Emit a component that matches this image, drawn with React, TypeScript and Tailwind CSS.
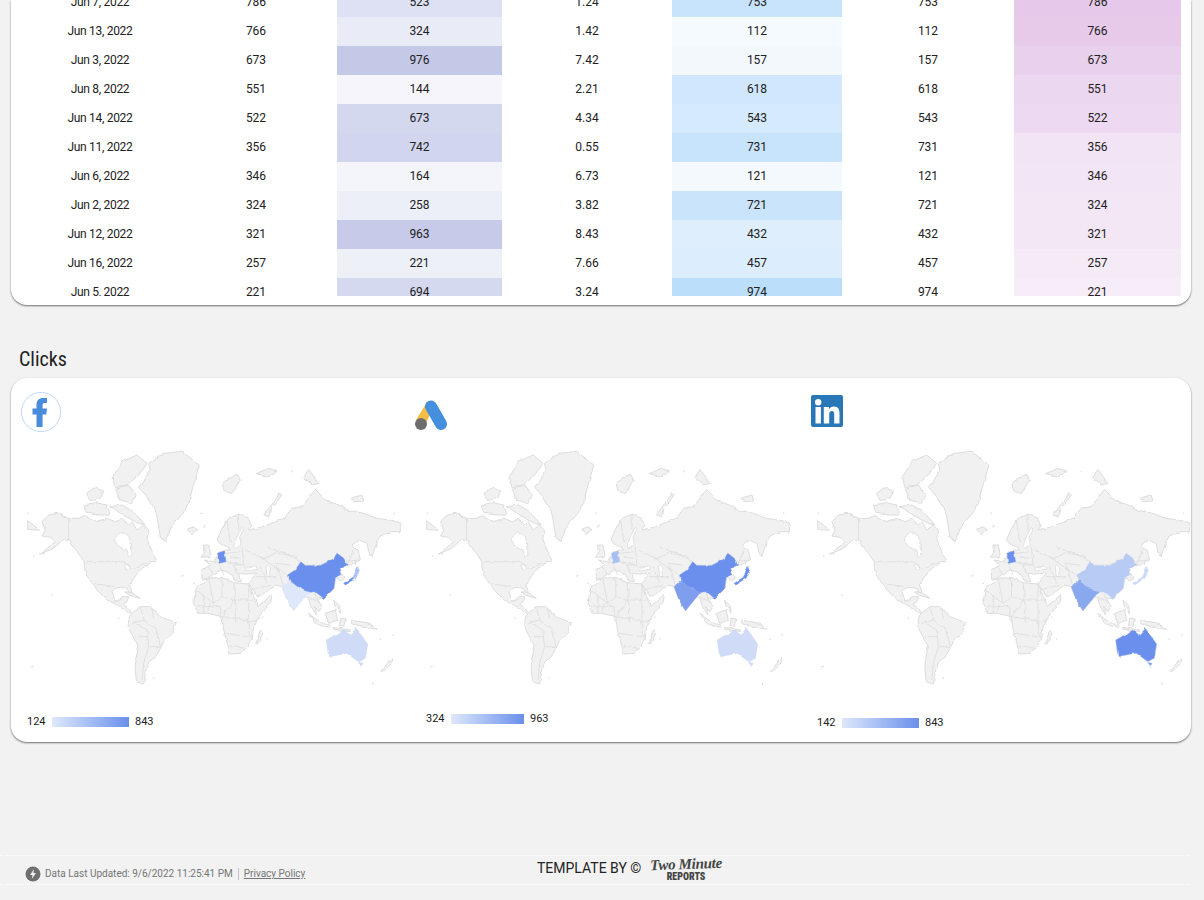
import React from "react";

const rows = [
  ["Jun 7, 2022", "786", "523", "#dde1f3", "1.24", "753", "#c8e3fc", "#e6c9ea"],
  ["Jun 13, 2022", "766", "324", "#e9ecf7", "1.42", "112", "#f5faff", "#e7caea"],
  ["Jun 3, 2022", "673", "976", "#c5c9e8", "7.42", "157", "#f3f8fd", "#e9d0ec"],
  ["Jun 8, 2022", "551", "144", "#f5f5fb", "2.21", "618", "#d0e7fd", "#ecd7f0"],
  ["Jun 14, 2022", "522", "673", "#d4d8ef", "4.34", "543", "#d6eafd", "#edd9f1"],
  ["Jun 11, 2022", "356", "742", "#d1d5ee", "0.55", "731", "#c8e3fc", "#f2e4f5"],
  ["Jun 6, 2022", "346", "164", "#f4f4fb", "6.73", "121", "#f4f9fe", "#f2e5f5"],
  ["Jun 2, 2022", "324", "258", "#eceff8", "3.82", "721", "#cae4fc", "#f3e7f6"],
  ["Jun 12, 2022", "321", "963", "#c7cae8", "8.43", "432", "#deeefd", "#f3e7f6"],
  ["Jun 16, 2022", "257", "221", "#eef0f8", "7.66", "457", "#dcedfd", "#f5ebf7"],
  ["Jun 5, 2022", "221", "694", "#d5d9ef", "3.24", "974", "#bbdefb", "#f6edf8"],
];

const land = [
  // North America
  "M125 215 L145 195 L170 190 L205 205 L235 205 L255 197 L290 215 L320 205 L345 215 L365 205 L385 225 L395 215 L410 240 L430 225 L445 240 L440 265 L447 285 L458 310 L470 335 L450 335 L440 348 L420 360 L405 378 L395 395 L388 405 L398 435 L392 438 L380 415 L360 412 L345 415 L335 425 L345 450 L360 450 L365 440 L385 440 L380 455 L368 462 L385 475 L395 490 L385 490 L370 475 L345 462 L320 450 L290 420 L275 400 L258 375 L252 350 L252 335 L235 310 L215 285 L205 270 L185 272 L160 295 L120 312 L165 275 L150 262 L125 258 L135 240 Z",
  // South America
  "M388 498 L405 480 L420 470 L450 470 L480 500 L527 518 L515 550 L490 575 L482 592 L465 622 L445 640 L438 655 L430 702 L408 695 L404 650 L410 610 L415 590 L388 540 L384 510 Z",
  // Greenland
  "M415 112 L450 62 L445 40 L490 10 L545 4 L597 45 L575 120 L565 160 L548 190 L512 230 L495 275 L480 262 L470 200 L465 180 L440 140 Z",
  // Arctic islands
  "M258 130 L285 112 L310 125 L300 145 L270 152 Z",
  "M250 165 L285 158 L320 165 L330 195 L295 195 L258 190 Z",
  "M330 170 L365 165 L400 185 L435 225 L420 222 L395 210 L370 195 Z",
  "M335 85 L365 35 L410 15 L440 40 L415 75 L380 105 L345 110 Z",
  "M345 115 L385 105 L408 135 L395 160 L360 150 Z",
  // Iceland, Britain, Ireland, Svalbard etc
  "M560 238 L580 230 L592 240 L575 252 Z",
  "M612 285 L625 285 L632 320 L602 322 L614 305 Z",
  "M665 95 L710 72 L720 90 L695 130 L672 125 Z",
  "M770 70 L805 55 L830 62 L805 82 Z",
  "M790 195 L840 130 L845 135 L810 180 L805 200 Z",
  "M910 80 L925 58 L955 100 L935 105 Z",
  "M1048 145 L1085 135 L1090 152 L1060 155 Z",
  "M1060 305 L1072 310 L1068 345 L1062 335 Z",
  // Africa
  "M580 460 L585 420 L625 385 L665 382 L700 398 L745 402 L772 470 L815 432 L812 455 L780 492 L760 530 L755 570 L722 610 L690 612 L670 540 L665 500 L622 490 L592 490 Z",
  "M765 580 L782 540 L788 550 L772 582 Z",
  // Eurasia
  "M605 378 L605 360 L630 345 L612 330 L640 335 L652 310 L675 300 L690 300 L680 290 L660 282 L650 270 L665 235 L685 205 L715 192 L745 205 L755 225 L745 240 L770 235 L800 225 L825 215 L850 205 L875 175 L905 170 L945 118 L975 150 L1015 165 L1040 180 L1090 190 L1130 205 L1165 210 L1200 218 L1200 245 L1170 245 L1140 258 L1130 275 L1115 320 L1105 305 L1100 280 L1075 270 L1055 285 L1075 305 L1080 330 L1050 345 L1040 345 L1018 355 L1030 375 L1033 385 L1018 395 L1008 380 L1005 395 L1000 416 L975 440 L950 445 L965 470 L955 485 L945 470 L948 495 L930 465 L925 445 L915 440 L900 450 L880 482 L860 450 L845 410 L825 405 L810 415 L800 425 L770 442 L755 415 L745 402 L755 385 L770 370 L735 372 L715 370 L720 395 L705 392 L695 375 L680 365 L660 360 L640 372 L620 385 L605 388 Z",
  // NZ, SE Asia
  "M1142 662 L1175 625 L1178 632 L1150 665 Z",
  "M925 490 L950 510 L990 530 L985 535 L945 520 Z",
  "M975 490 L1005 480 L1012 510 L985 520 Z",
  "M1020 505 L1035 505 L1030 530 L1018 525 Z",
  "M1000 450 L1018 468 L1020 490 L1005 470 Z",
  "M1050 510 L1110 520 L1128 538 L1090 530 L1055 522 Z",
  "M1000 532 L1050 540 L1050 545 L1000 538 Z",
  "M375 425 L395 428 L420 445 L385 435 Z",
  "M82 212 L118 240 L100 240 L82 238 Z",
];

const water = [
  "M345 262 L365 245 L385 258 L392 275 L395 315 L385 322 L380 300 L350 285 Z",
  "M372 345 L384 343 L390 356 L378 358 Z",
  "M700 288 L712 255 L725 232 L730 238 L718 262 L722 285 L708 294 Z",
  "M735 352 L768 348 L772 358 L738 362 Z",
  "M797 348 L806 348 L809 382 L800 378 Z",
];

const borders = [
  "M205 205 L205 270", "M252 335 L370 335 L395 355 L440 340", "M280 402 L310 405 L345 410",
  "M345 450 L362 445", "M420 470 L430 510 L470 540 L480 590", "M405 520 L440 540 L445 590 L430 640 L425 690",
  "M430 510 L395 520", "M455 475 L460 505", "M445 590 L480 590", "M405 560 L440 560",
  "M585 420 L640 460 L665 440 L700 450 L760 450", "M625 385 L640 460", "M665 382 L665 440", "M700 398 L710 520", "M745 402 L745 520 L790 500",
  "M590 470 L660 470 L660 510", "M665 500 L740 510 L755 570", "M675 550 L745 560", "M690 590 L740 595", "M620 490 L630 460", "M610 435 L610 490", "M700 450 L665 500",
  "M640 338 L655 340 L670 375", "M677 335 L730 345 L735 350", "M655 305 L680 310 L720 305", "M725 290 L730 345", "M680 212 L690 280", "M715 192 L715 240", "M690 320 L720 325", "M695 345 L730 345", "M700 345 L710 375", "M622 350 L640 372",
  "M735 300 L790 325 L830 310 L880 315 L900 335", "M780 350 L800 400", "M780 322 L860 375", "M830 345 L850 410", "M770 380 L830 380", "M800 290 L900 330", "M825 340 L870 345", "M750 420 L810 405",
  "M915 345 L960 345 L1000 325", "M945 425 L948 452", "M925 440 L960 460", "M1040 345 L1060 300", "M1030 335 L1080 330",
];

const islands = [
  [85, 190], [155, 435], [355, 505], [80, 553], [95, 650], [460, 685], [545, 378], [605, 190], [1185, 190], [1178, 555], [1140, 568], [800, 567], [1118, 700], [100, 318], [130, 312], [610, 230], [875, 62], [580, 400], [548, 375],
];

const china = "M862 375 L885 360 L902 335 L915 347 L960 347 L1000 327 L1010 310 L1030 325 L1040 345 L1018 355 L1025 372 L1005 382 L1000 416 L970 445 L945 425 L920 427 L890 410 L865 397 Z";
const germany = "M652 310 L672 303 L677 335 L655 340 Z";
const india = "M845 410 L868 392 L890 410 L905 420 L925 427 L915 440 L880 482 L860 450 Z";
const australia = "M978 570 L1030 540 L1050 555 L1068 535 L1102 582 L1095 625 L1075 635 L1040 610 L985 620 Z M1075 637 L1088 640 L1082 652 Z";
const japanSouth = "M1030 400 L1058 382 L1064 388 L1035 405 Z";
const japanNorth = "M1058 382 L1072 350 L1078 365 L1064 388 Z";

type Fills = { china: string; germany: string; india: string; australia: string; japanS: string; japanN: string };

function WorldMap({ width, fills }: { width: number; fills: Fills }) {
  return (
    <svg width={width} height={240} viewBox="80 0 1125 720" preserveAspectRatio="none" className="block">
      <defs>
        <filter id="rough" x="-2%" y="-2%" width="104%" height="104%">
          <feTurbulence type="fractalNoise" baseFrequency="0.05" numOctaves="2" seed="4" result="n" />
          <feDisplacementMap in="SourceGraphic" in2="n" scale="9" xChannelSelector="R" yChannelSelector="G" />
        </filter>
      </defs>
      <g filter="url(#rough)">
        <g fill="#f1f1f1" stroke="#dcdcdc" strokeWidth={3} strokeLinejoin="round">
          {land.map((d, i) => (
            <path key={i} d={d} />
          ))}
        </g>
        <g fill="#fff" stroke="#dcdcdc" strokeWidth={2.5}>
          {water.map((d, i) => (
            <path key={i} d={d} />
          ))}
        </g>
        <g fill="none" stroke="#dcdcdc" strokeWidth={2.5} strokeLinejoin="round">
          {borders.map((d, i) => (
            <path key={i} d={d} />
          ))}
        </g>
        <g fill="#dcdcdc">
          {islands.map(([x, y], i) => (
            <circle key={i} cx={x} cy={y} r={2.5} />
          ))}
        </g>
        <g strokeWidth={1.5} strokeLinejoin="round">
          <path d={china} fill={fills.china} stroke={fills.china} />
          <path d={germany} fill={fills.germany} stroke={fills.germany} />
          <path d={india} fill={fills.india} stroke={fills.india} />
          <path d={australia} fill={fills.australia} stroke="#c4d2f3" />
          <path d={japanSouth} fill={fills.japanS} stroke={fills.japanS} />
          <path d={japanNorth} fill={fills.japanN} stroke={fills.japanN} />
        </g>
      </g>
    </svg>
  );
}

function Legend({ lo, hi, barW }: { lo: string; hi: string; barW: string }) {
  return (
    <div className="flex items-center text-[11px] leading-[14px] text-[#212121]">
      <span className="w-[25px]">{lo}</span>
      <div className={`h-[10px] ${barW} bg-gradient-to-r from-[#dfe8fa] to-[#6a8fea]`} />
      <span className="ml-[6px]">{hi}</span>
    </div>
  );
}

function FacebookIcon() {
  return (
    <svg width="40" height="40" viewBox="0 0 40 40" className="block">
      <circle cx="20" cy="20" r="19.6" fill="#fff" stroke="#a9c6f4" strokeWidth="0.7" />
      <path
        d="M15.5 35 V22.5 H11.5 V16.5 H15.5 V12.5 C15.5 8.5 18 6 22 6 H26 V11 H23.4 C22.2 11 21.6 11.8 21.6 13 V16.5 H26 L25.2 22.5 H21.6 V35 Z"
        fill="#4a8cdc"
      />
    </svg>
  );
}

function AdsIcon() {
  return (
    <svg width="34" height="32" viewBox="0 0 34 32" className="block">
      <path d="M1 20 L12 2 L18 8 L10 25 Z" fill="#f6bd45" />
      <path d="M16 6.5 L26 24" stroke="#4590de" strokeWidth="12" strokeLinecap="round" fill="none" />
      <circle cx="6" cy="24" r="6" fill="#6d6d6d" />
    </svg>
  );
}

function LinkedinIcon() {
  return (
    <svg width="32" height="32" viewBox="0 0 32 32" className="block">
      <rect width="32" height="32" rx="2" fill="#2a77b7" />
      <circle cx="7.2" cy="7.2" r="3.2" fill="#fff" />
      <rect x="4.5" y="12" width="5.4" height="16.5" fill="#fff" />
      <path
        d="M12.8 12 H18 V14.3 C18.9 12.8 20.6 11.6 23 11.6 C27.6 11.6 28.5 14.6 28.5 18.6 V28.5 H23.2 V19.6 C23.2 17.6 23 15.9 21 15.9 C18.9 15.9 18.2 17.4 18.2 19.6 V28.5 H12.8 Z"
        fill="#fff"
      />
    </svg>
  );
}

export default function App() {
  return (
    <div className="h-[900px] w-full overflow-hidden bg-[#f2f2f2] [font-family:Roboto,sans-serif] text-[#212121]">
      <div className="mx-[11px] h-[305px] w-[1180px] rounded-b-[16px] bg-white shadow-[0_1px_2px_rgba(0,0,0,0.55)]">
        <div className="h-[296px] overflow-hidden">
          <div className="-mt-[12px] pl-[14px]">
            {rows.map((r) => (
              <div key={r[0]} className="grid h-[29px] grid-cols-[150px_162px_165px_170px_170px_172px_167px] text-center text-[12px]">
                <div className="flex h-full items-center justify-center pb-[2px] tracking-[-0.3px]">{r[0]}</div>
                <div className="flex h-full items-center justify-center pb-[2px]">{r[1]}</div>
                <div className="flex h-full items-center justify-center pb-[2px]" style={{ backgroundColor: r[3] }}>{r[2]}</div>
                <div className="flex h-full items-center justify-center pb-[2px]">{r[4]}</div>
                <div className="flex h-full items-center justify-center pb-[2px]" style={{ backgroundColor: r[6] }}>{r[5]}</div>
                <div className="flex h-full items-center justify-center pb-[2px]">{r[5]}</div>
                <div className="flex h-full items-center justify-center pb-[2px]" style={{ backgroundColor: r[7] }}>{r[1]}</div>
              </div>
            ))}
          </div>
        </div>
      </div>

      <div className="ml-[19px] mt-[41px] h-[32px] text-[20px] leading-[26px] [font-stretch:75%]">Clicks</div>

      <div className="mx-[11px] grid h-[364px] w-[1180px] grid-cols-[395px_395px_390px] rounded-[16px] bg-white shadow-[0_1px_2px_rgba(0,0,0,0.55)]">
        <div>
          <div className="ml-[10px] h-[72px] pt-[14px]"><FacebookIcon /></div>
          <div className="ml-[16px]">
            <WorldMap width={375} fills={{ china: "#6a8fec", germany: "#6a8fec", india: "#dfe8fa", australia: "#d0dcf7", japanS: "#6a8fec", japanN: "#a9c1f3" }} />
            <div className="mt-[25px]"><Legend lo="124" hi="843" barW="w-[77px]" /></div>
          </div>
        </div>
        <div>
          <div className="ml-[9px] h-[72px] pt-[22px]"><AdsIcon /></div>
          <div className="ml-[20px]">
            <WorldMap width={365} fills={{ china: "#6a8fec", germany: "#a7c0f3", india: "#7f9fee", australia: "#d0dcf7", japanS: "#6a8fec", japanN: "#6a8fec" }} />
            <div className="mt-[22px]"><Legend lo="324" hi="963" barW="w-[73px]" /></div>
          </div>
        </div>
        <div>
          <div className="ml-[10px] h-[72px] pt-[17px]"><LinkedinIcon /></div>
          <div className="ml-[16px]">
            <WorldMap width={374} fills={{ china: "#b7cbf5", germany: "#6a8fec", india: "#8aa8ee", australia: "#6a8fec", japanS: "#ccd9f6", japanN: "#ccd9f6" }} />
            <div className="mt-[26px]"><Legend lo="142" hi="843" barW="w-[77px]" /></div>
          </div>
        </div>
      </div>

      <div className="mt-[113px] flex h-[30px] w-[1190px] items-center border-y border-dotted border-white">
        <div className="ml-[25px] mt-[7px] flex w-[512px] items-center text-[10px] text-[#757575]">
          <svg width="16" height="16" viewBox="0 0 16 16" className="mr-[4px] block">
            <circle cx="8" cy="8" r="7.5" fill="#6f6f6f" />
            <path d="M9 3 L5 9 H7.5 L6.8 13 L11 7 H8.4 Z" fill="#f2f2f2" />
          </svg>
          <span>Data Last Updated: 9/6/2022 11:25:41 PM</span>
          <span className="mx-[5px] h-[12px] w-px bg-[#c4c4c4]" />
          <span className="underline">Privacy Policy</span>
        </div>
        <span className="mb-[3px] w-[113px] text-[14px] text-[#222]">TEMPLATE BY ©</span>
        <div className="mb-[3px] flex w-[72px] flex-col items-center leading-none text-[#444]">
          <span className="-rotate-2 whitespace-nowrap [font-family:'Liberation_Serif',serif] text-[15px] font-bold italic leading-[15px] tracking-[-0.3px]">Two Minute</span>
          <span className="text-[10px] font-black leading-[9px] [font-stretch:75%]">REPORTS</span>
        </div>
      </div>
    </div>
  );
}
